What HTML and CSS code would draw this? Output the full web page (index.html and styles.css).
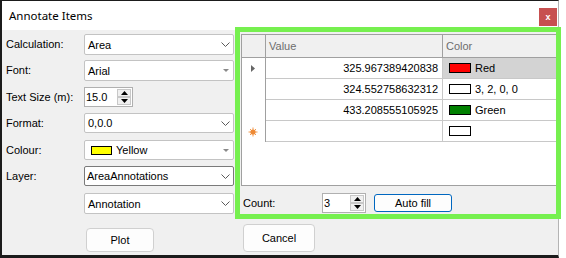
FILE: index.html
```html
<!DOCTYPE html>
<html>
<head>
<meta charset="utf-8">
<title>Annotate Items</title>
<link rel="stylesheet" href="styles.css">
</head>
<body>
<div class="window">
  <div class="titlebar">
    <span class="title">Annotate Items</span>
    <span class="close">x</span>
  </div>
  <div class="content">
    <div class="left">
      <div class="form">
        <span class="lbl">Calculation:</span>
        <div class="combo"><span>Area</span><svg class="chev" width="9" height="5" viewBox="0 0 9 5"><path d="M0.5 0.5 L4.5 4.5 L8.5 0.5" fill="none" stroke="#5a5a5a" stroke-width="1"/></svg></div>

        <span class="lbl">Font:</span>
        <div class="combo"><span>Arial</span><svg class="tri" width="6" height="3" viewBox="0 0 6 3"><path d="M0 0 H6 L3 3 Z" fill="#8a8a8a"/></svg></div>

        <span class="lbl lbl-num">Text Size (m):</span>
        <div class="num"><span class="num-val">15.0</span>
          <div class="spin">
            <div class="spin-btn"><svg width="7" height="4" viewBox="0 0 7 4"><path d="M0 4 L3.5 0 L7 4 Z" fill="#000"/></svg></div>
            <div class="spin-btn"><svg width="7" height="4" viewBox="0 0 7 4"><path d="M0 0 H7 L3.5 4 Z" fill="#000"/></svg></div>
          </div>
        </div>

        <span class="lbl lbl-num">Format:</span>
        <div class="combo combo-20"><span>0,0.0</span><svg class="chev" width="9" height="5" viewBox="0 0 9 5"><path d="M0.5 0.5 L4.5 4.5 L8.5 0.5" fill="none" stroke="#5a5a5a" stroke-width="1"/></svg></div>

        <span class="lbl lbl-num">Colour:</span>
        <div class="combo combo-20 combo-colour"><span class="swatch-wrap"><span class="swatch sw-yellow"></span><span>Yellow</span></span><svg class="tri" width="6" height="3" viewBox="0 0 6 3"><path d="M0 0 H6 L3 3 Z" fill="#8a8a8a"/></svg></div>

        <span class="lbl lbl-num">Layer:</span>
        <div class="combo combo-20 combo-dark"><span>AreaAnnotations</span><svg class="chev" width="9" height="5" viewBox="0 0 9 5"><path d="M0.5 0.5 L4.5 4.5 L8.5 0.5" fill="none" stroke="#5a5a5a" stroke-width="1"/></svg></div>

        <span class="lbl"></span>
        <div class="combo"><span>Annotation</span><svg class="chev" width="9" height="5" viewBox="0 0 9 5"><path d="M0.5 0.5 L4.5 4.5 L8.5 0.5" fill="none" stroke="#5a5a5a" stroke-width="1"/></svg></div>
      </div>
      <button class="btn btn-plot">Plot</button>
    </div>

    <div class="right">
      <div class="grid">
        <div class="grow ghead">
          <div class="gc rh"></div>
          <div class="gc hc">Value</div>
          <div class="gc hc hc-last">Color</div>
        </div>
        <div class="grow">
          <div class="gc rh"><svg width="4" height="7" viewBox="0 0 4 7"><path d="M0 0 L4 3.5 L0 7 Z" fill="#666"/></svg></div>
          <div class="gc vc">325.967389420838</div>
          <div class="gc cc cc-sel"><span class="swatch gsw sw-red"></span>Red</div>
        </div>
        <div class="grow">
          <div class="gc rh"></div>
          <div class="gc vc">324.552758632312</div>
          <div class="gc cc"><span class="swatch gsw sw-white"></span>3, 2, 0, 0</div>
        </div>
        <div class="grow">
          <div class="gc rh"></div>
          <div class="gc vc">433.208555105925</div>
          <div class="gc cc"><span class="swatch gsw sw-green"></span>Green</div>
        </div>
        <div class="grow">
          <div class="gc rh"><svg width="10" height="10" viewBox="0 0 10 10"><g stroke="#f39a4e" stroke-width="1"><path d="M5 0.5 V9.5 M0.5 5 H9.5 M2 2 L8 8 M8 2 L2 8"/></g><circle cx="5" cy="5" r="2.6" fill="#ee8a36"/></svg></div>
          <div class="gc vc"></div>
          <div class="gc cc"><span class="swatch gsw sw-white"></span></div>
        </div>
      </div>
      <div class="countrow">
        <span class="count-lbl">Count:</span>
        <div class="num num-count"><span class="num-val">3</span>
          <div class="spin">
            <div class="spin-btn"><svg width="7" height="4" viewBox="0 0 7 4"><path d="M0 4 L3.5 0 L7 4 Z" fill="#000"/></svg></div>
            <div class="spin-btn"><svg width="7" height="4" viewBox="0 0 7 4"><path d="M0 0 H7 L3.5 4 Z" fill="#000"/></svg></div>
          </div>
        </div>
        <button class="btn btn-auto">Auto fill</button>
      </div>
      <button class="btn btn-cancel">Cancel</button>
    </div>
  </div>
  <div class="highlight"></div>
</div>
</body>
</html>
```

FILE: styles.css
```css
html, body {
  margin: 0;
  padding: 0;
  background: #ffffff;
}
body {
  font-family: "Liberation Sans", Arial, sans-serif;
  font-size: 11px;
  color: #000;
}
.window {
  position: relative;
  width: 556px;
  height: 254px;
  border-left: 2px solid #1b1b1b;
  border-top: 1px solid #1b1b1b;
  border-right: 1px solid #b4b4b4;
  border-bottom: 3px solid #1b1b1b;
  background: #f0f0f0;
  display: flex;
  flex-direction: column;
}
.titlebar {
  height: 29px;
  background: #fff;
  display: flex;
  justify-content: space-between;
  flex-shrink: 0;
}
.title {
  font-family: "Noto Sans", "Open Sans", sans-serif;
  font-size: 11.5px;
  line-height: 29px;
  padding-left: 7px;
  color: #000;
}
.close {
  width: 18px;
  height: 18px;
  margin-top: 7px;
  margin-right: 1px;
  background: #c75050;
  color: #fff;
  font-weight: bold;
  font-size: 9px;
  display: flex;
  align-items: center;
  justify-content: center;
  line-height: 1;
}
.content {
  flex: 1;
  display: flex;
}
.left {
  width: 239px;
  box-sizing: border-box;
  padding: 4px 0 0 4px;
  flex-shrink: 0;
}
.form {
  display: grid;
  grid-template-columns: 78px 150px;
  grid-template-rows: 26px 27px 26px 27px 26px 27px 21px;
  align-items: start;
}
.lbl {
  line-height: 21px;
  white-space: nowrap;
}
.lbl-num {
  line-height: 20px;
}
.combo {
  height: 21px;
  box-sizing: border-box;
  border: 1px solid #c3c3c3;
  border-radius: 2px;
  background: #fff;
  display: flex;
  align-items: center;
  justify-content: space-between;
  padding: 0 3px 0 3px;
  white-space: nowrap;
}
.combo-20 {
  height: 20px;
}
.combo-dark {
  border-color: #7a7a7a;
  padding-left: 2px;
}
.combo .tri {
  margin-right: 1px;
}
.swatch-wrap {
  display: flex;
  align-items: center;
}
.combo-colour {
  padding-left: 6px;
}
.swatch {
  display: inline-block;
  box-sizing: border-box;
  border: 1px solid #000;
}
.sw-yellow {
  width: 21px;
  height: 9px;
  background: #ffff00;
  margin-right: 4px;
}
.num {
  width: 49px;
  height: 20px;
  box-sizing: border-box;
  border: 1px solid #b0b0b0;
  background: #fff;
  display: flex;
  justify-content: space-between;
}
.num-val {
  padding-left: 1px;
  line-height: 18px;
}
.spin {
  width: 15px;
  display: flex;
  flex-direction: column;
  padding: 1px 1px 1px 0;
  box-sizing: border-box;
}
.spin-btn {
  flex: 1;
  border: 1px solid #c8c8c8;
  background: #f0f0f0;
  display: flex;
  align-items: center;
  justify-content: center;
  box-sizing: border-box;
}
.btn {
  font-family: "Liberation Sans", Arial, sans-serif;
  font-size: 11px;
  color: #000;
  background: #fdfdfd;
  border: 1px solid #d0d0d0;
  border-radius: 4px;
  padding: 0;
  display: block;
}
.btn-plot {
  width: 68px;
  height: 24px;
  margin: 14px 0 0 80px;
}
.right {
  flex: 1;
  padding-top: 4px;
}
.grid {
  height: 152px;
  box-sizing: border-box;
  border: 1px solid #a0a0a0;
  border-right: none;
  background: #fff;
}
.grow {
  display: grid;
  grid-template-columns: 24px 177px 1fr;
  height: 21px;
}
.ghead {
  height: 23px;
}
.gc {
  box-sizing: border-box;
  white-space: nowrap;
  overflow: hidden;
}
.rh {
  border-right: 1px solid #a0a0a0;
  display: flex;
  align-items: center;
  justify-content: center;
  padding-right: 1px;
}
.ghead .gc {
  background: #f0f0f0;
  border-bottom: 1px solid #a0a0a0;
  border-right: 1px solid #a0a0a0;
  line-height: 22px;
}
.hc {
  color: #6d6d6d;
  padding-left: 3px;
}
.vc {
  text-align: right;
  padding-right: 4px;
  line-height: 20px;
  border-right: 1px solid #c8c8c8;
  border-bottom: 1px solid #c8c8c8;
}
.cc {
  line-height: 20px;
  border-bottom: 1px solid #c8c8c8;
  padding-left: 6px;
  display: flex;
  align-items: center;
}
.cc-sel {
  background: #d3d3d3;
}
.gsw {
  width: 22px;
  height: 10px;
  margin-right: 4px;
}
.sw-red { background: #ff0000; }
.sw-green { background: #008000; }
.sw-white { background: #ffffff; }
.countrow {
  margin-top: 7px;
  height: 20px;
  display: flex;
  align-items: center;
}
.count-lbl {
  width: 79px;
  padding-left: 2px;
}
.num-count {
  width: 44px;
}
.btn-auto {
  width: 78px;
  height: 18px;
  margin-left: 8px;
  border-color: #0067c0;
  border-radius: 3px;
}
.btn-cancel {
  width: 72px;
  height: 28px;
  margin: 11px 0 0 2px;
}
.highlight {
  position: absolute;
  left: 233px;
  top: 26px;
  width: 326px;
  height: 192px;
  box-sizing: border-box;
  border: 5px solid #76f04f;
  pointer-events: none;
}
```
